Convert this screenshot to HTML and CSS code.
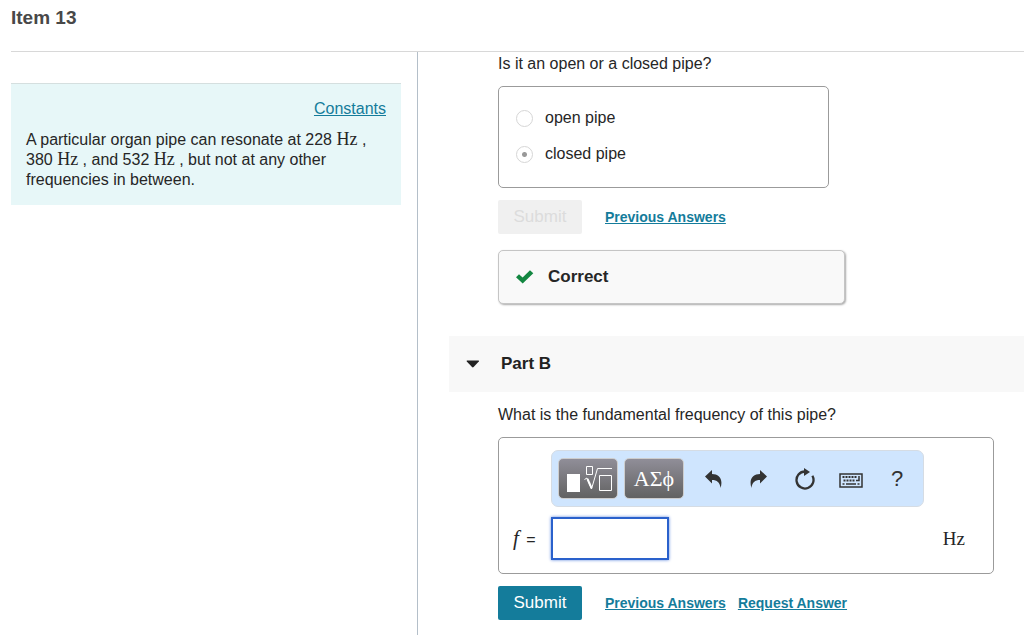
FILE: index.html
```html
<!DOCTYPE html>
<html lang="en">
  <head>
    <meta charset="utf-8" />
    <title>Item 13</title>
    <link rel="stylesheet" href="styles.css">
  </head>
  <body>
    <header>
      <h1>Item 13</h1>
    </header>

    <div class="columns">
      <aside>
        <div class="problem">
          <a class="constants" href="#constants">Constants</a>
          <p>
            A particular organ pipe can resonate at 228 <span class="unit">Hz</span> ,
            380 <span class="unit">Hz</span> , and 532 <span class="unit">Hz</span> ,
            but not at any other frequencies in between.
          </p>
        </div>
      </aside>

      <main>
        <!-- Part A -->
        <form class="part">
          <p class="question" id="question-a">Is it an open or a closed pipe?</p>
          <div class="choices" role="radiogroup" aria-labelledby="question-a">
            <label><input type="radio" name="pipe" value="open" disabled>open pipe</label>
            <label><input type="radio" name="pipe" value="closed" checked disabled>closed pipe</label>
          </div>
          <div class="actions">
            <button type="submit" class="submit" disabled>Submit</button>
            <a href="#previous-a">Previous Answers</a>
          </div>
          <div class="feedback">
            <svg width="18" height="14" viewBox="0 0 18 14" aria-hidden="true">
              <path d="M0 7.300 3 4.300 6.600 7.600 14 .3 17.300 3.200 6.700 13.500Z" fill="#138741" />
            </svg>
            <strong>Correct</strong>
          </div>
        </form>

        <button type="button" class="part-header" aria-expanded="true">
          <svg width="14" height="8" viewBox="0 0 14 8" aria-hidden="true">
            <path d="M1.200 .5h11.200q1 0 .4.9L7.600 7q-.8.8-1.600 0L.8 1.400Q.2.5 1.200.5Z" fill="#222" />
          </svg>
          Part B
        </button>

        <!-- Part B -->
        <form class="part">
          <label class="question" for="frequency">What is the fundamental frequency of this pipe?</label>
          <div class="answer">
            <div class="toolbar">
              <button type="button" class="template" aria-label="Templates">
                <svg width="48" height="30" viewBox="0 0 48 30" aria-hidden="true">
                  <path d="M3 10h13v18H3z" fill="#fff" />
                  <path d="M22.500 2.500h6v8h-6zM35.500 11.500h12v15h-12zM33.500 4.500H48" fill="none" stroke="#fff" />
                  <path d="M20.500 15.500l2.500-1.500 4.500 11 6-20.500" fill="none" stroke="#fff" />
                  <path d="M23.500 15l4 9" stroke="#fff" stroke-width="2" />
                </svg>
              </button>
              <button type="button" class="template symbols">ΑΣϕ</button>
              <button type="button" class="tool" aria-label="Undo">
                <svg width="18" height="20" viewBox="0 0 18 20" aria-hidden="true">
                  <path d="M1 7.500 8 1v4c7 0 11.500 5 8.500 14C16 13.500 13 11 8 11v3.500Z" fill="#333" />
                </svg>
              </button>
              <button type="button" class="tool" aria-label="Redo">
                <svg width="18" height="20" viewBox="0 0 18 20" aria-hidden="true">
                  <path d="M17 7.500 10 1v4C3 5-1.500 10 1.500 19 2 13.500 5 11 10 11v3.500Z" fill="#333" />
                </svg>
              </button>
              <button type="button" class="tool" aria-label="Reset">
                <svg width="20" height="24" viewBox="0 0 20 24" aria-hidden="true">
                  <path d="M10 4.500A8.500 8.500 0 1 0 17.400 8.800" fill="none" stroke="#333" stroke-width="2.300" />
                  <path d="M9 1l6 4-6 4z" fill="#333" />
                </svg>
              </button>
              <button type="button" class="tool" aria-label="Keyboard shortcuts">
                <svg width="24" height="20" viewBox="0 0 24 20" aria-hidden="true">
                  <path d="M1 5h22v13H1z" fill="none" stroke="#333" stroke-width="1.500" />
                  <path d="M3.500 8h14M4.500 11.500h11" stroke="#333" stroke-width="2" stroke-dasharray="2 1" />
                  <path d="M20 7v4.500h-3M3.500 15h2M7 15h10M18.500 15h2" fill="none" stroke="#333" stroke-width="1.500" />
                </svg>
              </button>
              <button type="button" class="tool help" aria-label="Help">?</button>
            </div>
            <div class="equation">
              <span class="variable"><i>f</i> =</span>
              <input type="text" id="frequency">
              <span class="unit">Hz</span>
            </div>
          </div>
          <div class="actions">
            <button type="submit" class="submit">Submit</button>
            <a href="#previous-b">Previous Answers</a>
            <a href="#request">Request Answer</a>
          </div>
        </form>
      </main>
    </div>
  </body>
</html>
```
FILE: styles.css
```css
* {
  box-sizing: border-box;
  margin: 0;
  padding: 0;
}

body {
  display: flex;
  flex-direction: column;
  min-height: 100vh;
  padding-left: 11px;
  font: 16px/20px "Liberation Sans", Arial, sans-serif;
  color: #262626;
}

header {
  padding: 6px 0 21px;
  border-bottom: 1px solid #d8d8d8;
}

h1 {
  font-size: 19px;
  line-height: 24px;
  color: #484848;
}

a {
  color: #147c9b;
}

svg {
  display: block;
}

button {
  border: 0;
  font: inherit;
  cursor: pointer;
}

.columns {
  display: grid;
  grid-template-columns: minmax(0, 407px) minmax(0, 1fr);
  flex: 1;
}

aside {
  padding: 31px 16px 0 0;
  border-right: 1px solid #b4bfc9;
}

.problem {
  display: flex;
  flex-direction: column;
  gap: 11px;
  padding: 15px 15px;
  border-top: 1px solid #d5dfdf;
  background: #e7f7f8;
}

.constants {
  align-self: flex-end;
}

.unit {
  font-family: "Liberation Serif", "Times New Roman", serif;
  font-size: 18px;
  line-height: 16px;
}

main {
  padding-left: 31px;
}

.part {
  padding: 2px 30px 16px 49px;
}

.question {
  display: block;
}

.choices {
  display: flex;
  flex-direction: column;
  gap: 16px;
  max-width: 331px;
  margin-top: 12px;
  padding: 21px 17px 23px;
  border: 1px solid #9b9b9b;
  border-radius: 5px;
}

.choices label {
  display: flex;
  align-items: center;
  gap: 12px;
}

.choices input {
  appearance: none;
  width: 17px;
  height: 17px;
  border: 1px solid #d6d6d6;
  border-radius: 50%;
  background: #fff;
}

.choices input:checked {
  background: radial-gradient(circle, #999 2px, #fff 3px);
}

.actions {
  display: flex;
  align-items: center;
  gap: 12px;
  margin-top: 12px;
  font-size: 14px;
  font-weight: bold;
}

.submit {
  min-width: 84px;
  height: 34px;
  margin-right: 11px;
  padding: 0 15px;
  border-radius: 2px;
  background: #147c9b;
  font-size: 17px;
  font-weight: normal;
  color: #fff;
}

.submit:disabled {
  background: #f0f0f0;
  color: #dcdcdc;
}

.feedback {
  display: flex;
  align-items: center;
  gap: 14px;
  max-width: 347px;
  margin-top: 16px;
  padding: 16px 17px;
  border: 1px solid #c5c5c5;
  border-radius: 5px;
  background: #f9f9f9;
  box-shadow: 1px 1px 2px #aaa;
  font-size: 17px;
}

.part-header {
  display: flex;
  align-items: center;
  gap: 21px;
  width: 100%;
  margin: 16px 0 11px;
  padding: 18px 17px;
  background: #f8f8f8;
  font-size: 17px;
  font-weight: bold;
  color: #222;
}

.answer {
  margin-top: 12px;
  padding: 12px 28px 13px 14px;
  border: 1px solid #9b9b9b;
  border-radius: 5px;
}

.toolbar {
  display: flex;
  align-items: center;
  width: fit-content;
  margin-left: 38px;
  padding: 7px 3px 7px 6px;
  border: 1px solid #d5dce4;
  border-radius: 7px;
  background: #cfe5fe;
}

.template {
  display: flex;
  align-items: center;
  justify-content: center;
  width: 60px;
  height: 41px;
  margin-right: 6px;
  border: 1px solid #cdcdcd;
  border-radius: 5px;
  background: linear-gradient(#908e98, #626262);
  color: #fff;
}

.symbols {
  font-family: "Liberation Serif", "Times New Roman", serif;
  font-size: 22px;
}

.tool {
  display: flex;
  align-items: center;
  justify-content: center;
  width: 46px;
  height: 40px;
  background: none;
  color: #333;
}

.help {
  font-size: 22px;
}

.equation {
  display: flex;
  align-items: center;
  margin-top: 10px;
}

.variable {
  width: 38px;
}

.variable i {
  margin-right: 3px;
  font-family: "Liberation Serif", "Times New Roman", serif;
  font-size: 21px;
}

.equation input {
  width: 118px;
  height: 43px;
  padding: 0 8px;
  border: 2px solid #2a61cc;
  outline: 0;
  box-shadow: 0 0 3px #5c86de;
  font: inherit;
}

.equation .unit {
  margin-left: auto;
  font-size: 19px;
}
```
